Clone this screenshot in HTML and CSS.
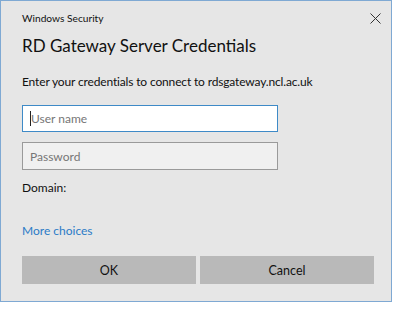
FILE: index.html
```html
<!DOCTYPE html>
<html>
<head>
<meta charset="utf-8">
<link rel="stylesheet" href="styles.css">
</head>
<body>
<div class="dialog">
  <div class="titlebar">
    <span class="app">Windows Security</span>
    <svg class="close" width="11" height="11" viewBox="0 0 11 11"><path d="M0.5 0.5 L10.5 10.5 M10.5 0.5 L0.5 10.5" stroke="#333" stroke-width="1" fill="none"/></svg>
  </div>
  <div class="title">RD Gateway Server Credentials</div>
  <div class="desc">Enter your credentials to connect to rdsgateway.ncl.ac.uk</div>
  <div class="field active"><span class="caret"></span><span class="ph">User name</span></div>
  <div class="field"><span class="ph">Password</span></div>
  <div class="domain">Domain:</div>
  <div class="more">More choices</div>
  <div class="buttons">
    <div class="btn">OK</div>
    <div class="btn">Cancel</div>
  </div>
</div>
</body>
</html>
```
FILE: styles.css
```css
html, body {
  margin: 0;
  padding: 0;
  background: #ffffff;
}
body {
  width: 400px;
  height: 309px;
  font-family: Lato, "Open Sans", sans-serif;
  color: #111111;
}
.dialog {
  box-sizing: border-box;
  width: 392px;
  height: 302px;
  border: 1px solid #7fa9d3;
  background: #e6e6e6;
  padding: 0 0 0 21px;
}
.titlebar {
  display: flex;
  align-items: center;
  justify-content: space-between;
  height: 16px;
  padding-top: 9px;
  padding-right: 10px;
}
.app {
  font-size: 10.2px;
  line-height: 16px;
}
.close {
  display: block;
}
.title {
  margin-top: 7px;
  font-size: 17px;
  line-height: 26px;
}
.desc {
  margin-top: 14px;
  font-size: 12px;
  line-height: 18px;
  letter-spacing: -0.15px;
}
.field {
  box-sizing: border-box;
  width: 256px;
  height: 28px;
  margin-top: 14px;
  border: 1px solid #9a9a9a;
  background: #f0f0f0;
  display: flex;
  align-items: center;
  padding-left: 7px;
}
.field + .field {
  margin-top: 10px;
}
.field.active {
  height: 27px;
  border: 1px solid #3e8ac7;
  background: #ffffff;
}
.caret {
  width: 1px;
  height: 15px;
  background: #222;
}
.ph {
  font-size: 12px;
  color: #767676;
}
.domain {
  margin-top: 9px;
  font-size: 12px;
  line-height: 18px;
}
.more {
  margin-top: 25px;
  font-size: 12px;
  line-height: 18px;
  color: #2b7bc7;
}
.buttons {
  margin-top: 16px;
  display: grid;
  grid-template-columns: 174px 174px;
  column-gap: 4px;
  width: 352px;
}
.btn {
  height: 28px;
  background: #b9b9b9;
  display: flex;
  align-items: center;
  justify-content: center;
  font-size: 12.5px;
}
```
